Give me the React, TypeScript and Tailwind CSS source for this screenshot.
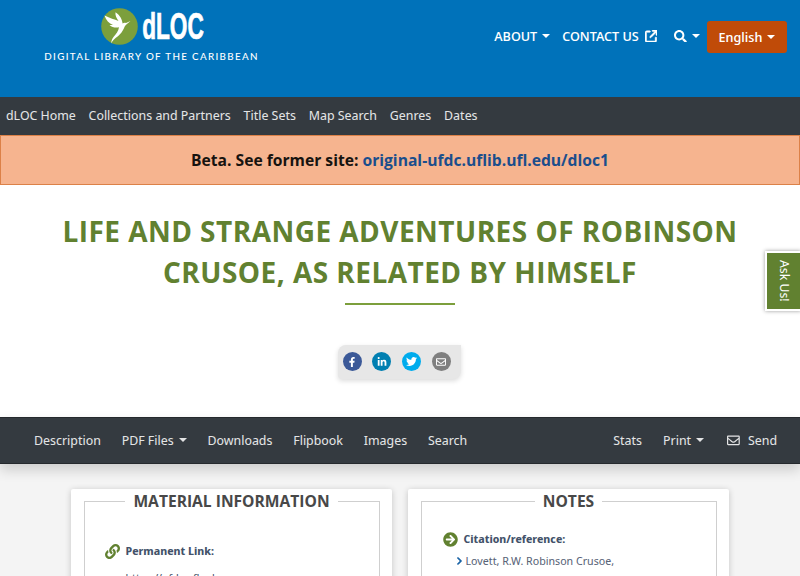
import type { ReactNode } from "react";
import {
  FaArrowCircleRight,
  FaFacebookF,
  FaLink,
  FaLinkedinIn,
  FaRegEnvelope,
  FaSearch,
  FaTwitter,
} from "react-icons/fa";
import { FaArrowUpRightFromSquare, FaChevronRight } from "react-icons/fa6";

const siteLinks = [
  "dLOC Home",
  "Collections and Partners",
  "Title Sets",
  "Map Search",
  "Genres",
  "Dates",
];

const itemLinks = [
  { label: "Description" },
  { label: "PDF Files", menu: true },
  { label: "Downloads" },
  { label: "Flipbook" },
  { label: "Images" },
  { label: "Search" },
];

const shareLinks = [
  { label: "Facebook", color: "bg-[#3b5998]", icon: <FaFacebookF size={10} /> },
  { label: "LinkedIn", color: "bg-[#007fb1]", icon: <FaLinkedinIn size={10} /> },
  { label: "Twitter", color: "bg-[#00aced]", icon: <FaTwitter size={11} /> },
  { label: "Email", color: "bg-[#7f7f7f]", icon: <FaRegEnvelope size={10} /> },
];

function Caret() {
  return (
    <span className="ml-[5px] inline-block border-x-4 border-t-4 border-x-transparent border-t-current align-[3px]" />
  );
}

function Logo() {
  return (
    <a className="flex w-[214px] flex-col items-center">
      <div className="ml-[3px] flex h-[37px] items-center gap-1">
        <svg width="37" height="37" viewBox="0 0 37 37">
          <circle cx="18.5" cy="18.5" r="18.3" fill="#7c9f3c" />
          <path
            d="M3.500 7.500C5 12 8 15.500 12 17L8.500 17C11 19.300 14.500 20 18 19.300C17.500 23.500 15 26 12.500 29C11 31 10.300 33 10.200 35.500C12.500 30.500 17 29 20.500 24.500C22.800 21.500 23 19 24.800 17L29.500 13L25 15C23.800 14.400 22.600 14.600 21.600 15.600C21 11.500 19.300 7.500 14.500 4.300C14 7.500 15.500 10 17.500 13C13.500 11 9 10.500 3.500 7.500z"
            fill="#fff"
          />
        </svg>
        <span className="flex w-[62px] justify-center">
          <span className="scale-x-[0.630] font-['Liberation_Sans',sans-serif] text-[36px] leading-none font-bold text-white [-webkit-text-stroke:0.7px_#fff]">
            dLOC
          </span>
        </span>
      </div>
      <div className="mt-1 ml-px font-['Lato',sans-serif] text-[9.800px] leading-[14px] font-medium tracking-[1.330px] whitespace-nowrap text-white">
        DIGITAL LIBRARY OF THE CARIBBEAN
      </div>
    </a>
  );
}

function Header() {
  return (
    <header className="flex h-[97px] items-start justify-between bg-[#0072ba] pt-2 pr-[13px] pl-[44px] text-white">
      <Logo />
      <nav className="mt-[13px] flex h-8 items-center text-[13.400px] font-medium whitespace-nowrap">
        <a className="pb-[2px]">
          ABOUT
          <Caret />
        </a>
        <a className="ml-3 flex items-center pb-[2px]">
          CONTACT US
          <FaArrowUpRightFromSquare className="ml-1.5 stroke-white stroke-[20px]" size={12.5} />
        </a>
        <a className="ml-[17px] flex items-center pb-[2px]">
          <FaSearch size={12.8} />
          <Caret />
        </a>
        <a className="ml-[7px] flex h-8 w-20 items-center justify-center rounded-[3px] bg-[#c04b08]">
          English
          <Caret />
        </a>
      </nav>
    </header>
  );
}

function ItemNav() {
  return (
    <nav className="relative flex h-[47px] items-center justify-between border-y border-[#25292d] bg-[#343a40] pr-[23px] pl-[34px] text-[13.150px] text-[#e3e4e5] shadow-[0_6px_12px_rgba(0,0,0,0.16)]">
      <div className="flex gap-[20.800px]">
        {itemLinks.map(({ label, menu }) => (
          <a key={label}>
            {label}
            {menu && <Caret />}
          </a>
        ))}
      </div>
      <div className="flex items-center">
        <a>Stats</a>
        <a className="ml-[21px]">
          Print
          <Caret />
        </a>
        <a className="ml-[23px] flex items-center gap-2">
          <FaRegEnvelope size={12.8} />
          Send
        </a>
      </div>
    </nav>
  );
}

function Card({ title, children }: { title: string; children: ReactNode }) {
  return (
    <section className="h-[300px] w-[321px] rounded-t-[2px] bg-white px-3 shadow-[0_1px_6px_rgba(0,0,0,0.2)]">
      <fieldset className="mx-[0.5px] h-full border border-[#cfcfcf]">
        <legend className="mx-auto px-2 font-['Open_Sans',sans-serif] text-[15.600px] leading-[25px] font-bold text-[#484848]">
          {title}
        </legend>
        {children}
      </fieldset>
    </section>
  );
}

export default function App() {
  return (
    <div className="h-[576px] w-[800px] overflow-hidden bg-white font-['Noto_Sans_Display','Noto_Sans',sans-serif]">
      <Header />
      <nav className="flex h-[38px] items-center gap-[12.800px] bg-[#343a40] px-1.5 text-[13.150px] text-[#e3e4e5]">
        {siteLinks.map((link) => (
          <a key={link}>{link}</a>
        ))}
      </nav>
      <div className="flex h-[50px] items-center justify-center border border-[#dc8148] bg-[#f6b48f] pt-px font-['Open_Sans',sans-serif] text-[15.650px] font-bold text-[#17130f]">
        <span>
          Beta. See former site:{" "}
          <a className="text-[#1b4e8c]">original-ufdc.uflib.ufl.edu/dloc1</a>
        </span>
      </div>

      <main className="flex h-[232px] flex-col items-center pt-[26px]">
        <h1 className="text-center font-['Open_Sans',sans-serif] text-[28px] leading-[41px] font-bold tracking-[0.470px] whitespace-nowrap text-[#618130]">
          LIFE AND STRANGE ADVENTURES OF ROBINSON
          <br />
          CRUSOE, AS RELATED BY HIMSELF
        </h1>
        <div className="mt-[10px] h-0.5 w-[110px] bg-[#7c9f3c]" />
        <div className="mt-[40px] mr-0.5 flex h-[34px] w-[123px] items-center gap-[10.700px] rounded-tl-lg rounded-br-lg rounded-bl-[4px] bg-[#e7e7e7] px-[5px] pb-px shadow-[0_2px_5px_rgba(0,0,0,0.14)]">
          {shareLinks.map(({ label, color, icon }) => (
            <a
              key={label}
              aria-label={label}
              className={`flex size-[19px] shrink-0 items-center justify-center rounded-full text-white ${color}`}
            >
              {icon}
            </a>
          ))}
        </div>
      </main>

      <ItemNav />

      <div className="flex h-[112px] justify-center gap-[16px] bg-[#f4f4f4] pt-[25px]">
        <Card title="MATERIAL INFORMATION">
          <div className="mt-[29px] ml-5 flex items-center gap-[6px] text-[11.200px] font-bold text-[#43526a]">
            <FaLink size={15} className="text-[#618130]" />
            Permanent Link:
          </div>
          <a className="mt-[10px] ml-[41px] block text-[11.200px] text-[#43526a]">
            https://ufdc.ufl.edu
          </a>
        </Card>
        <Card title="NOTES">
          <div className="mt-[17px] ml-[21px] flex items-center gap-[6px] text-[11.200px] font-bold text-[#43526a]">
            <FaArrowCircleRight size={15} className="text-[#618130]" />
            Citation/reference:
          </div>
          <div className="mt-[5px] ml-[33px] flex items-center gap-[3px] text-[11.300px] text-[#596478]">
            <FaChevronRight size={8} className="stroke-[#0b5aa0] stroke-[50px] text-[#0b5aa0]" />
            Lovett, R.W. Robinson Crusoe,
          </div>
        </Card>
      </div>

      <a className="absolute top-[251px] left-[765px] flex h-[60px] w-[36px] items-center justify-center border-2 border-r-0 border-white bg-[#618130] text-[13px] text-white shadow-[0_0_4px_rgba(0,0,0,0.4)] [writing-mode:vertical-rl]">
        Ask Us!
      </a>
    </div>
  );
}
